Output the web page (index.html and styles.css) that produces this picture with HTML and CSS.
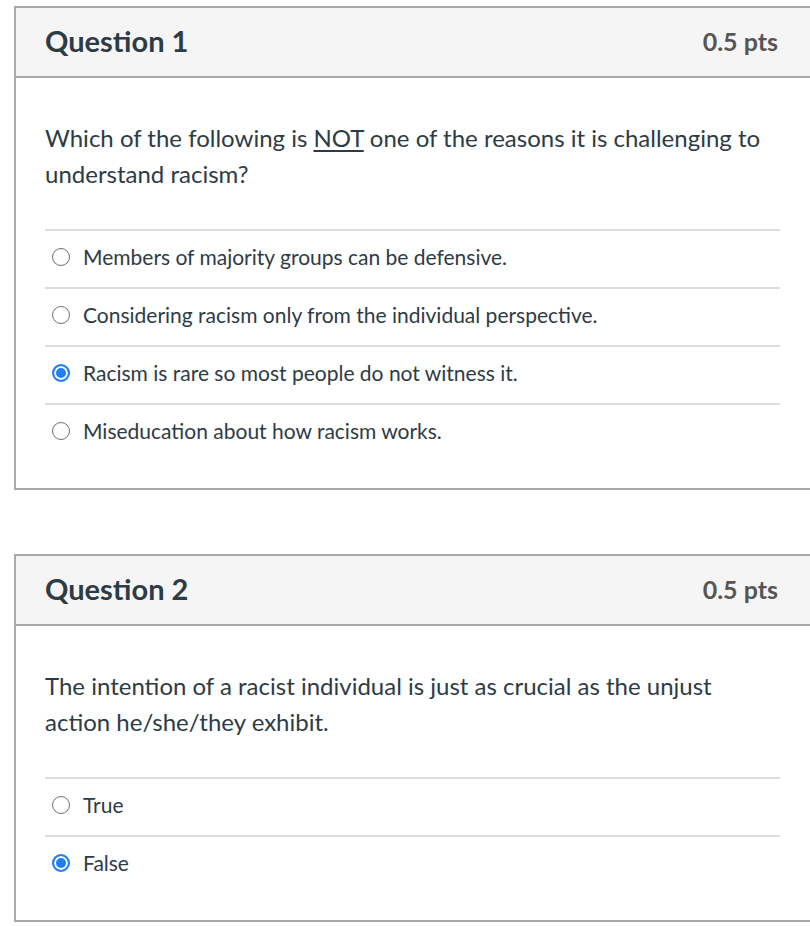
FILE: index.html
```html
<!DOCTYPE html>
<html lang="en">
<head>
<meta charset="utf-8">
<title>Quiz</title>
<link rel="stylesheet" href="styles.css">
</head>
<body>
<div class="page">
  <section class="card">
    <header class="card-header">
      <h2 class="q-title">Question 1</h2>
      <span class="q-pts">0.5 pts</span>
    </header>
    <div class="card-body">
      <p class="q-text">Which of the following is <u>NOT</u> one of the reasons it is challenging to understand racism?</p>
      <ul class="answers">
        <li class="answer"><span class="radio"></span><span class="answer-label">Members of majority groups can be defensive.</span></li>
        <li class="answer"><span class="radio"></span><span class="answer-label">Considering racism only from the individual perspective.</span></li>
        <li class="answer"><span class="radio checked"></span><span class="answer-label">Racism is rare so most people do not witness it.</span></li>
        <li class="answer"><span class="radio"></span><span class="answer-label">Miseducation about how racism works.</span></li>
      </ul>
    </div>
  </section>

  <section class="card">
    <header class="card-header">
      <h2 class="q-title">Question 2</h2>
      <span class="q-pts">0.5 pts</span>
    </header>
    <div class="card-body">
      <p class="q-text">The intention of a racist individual is just as crucial as the unjust action he/she/they exhibit.</p>
      <ul class="answers">
        <li class="answer"><span class="radio"></span><span class="answer-label">True</span></li>
        <li class="answer"><span class="radio checked"></span><span class="answer-label">False</span></li>
      </ul>
    </div>
  </section>
</div>
</body>
</html>
```

FILE: styles.css
```css
html, body {
  margin: 0;
  padding: 0;
  background: #ffffff;
  overflow: hidden;
}

body {
  font-family: Lato, "Open Sans", "Liberation Sans", sans-serif;
  color: #2d3b45;
}

.page {
  display: flex;
  flex-direction: column;
  gap: 64px;
  padding: 6px 0 0 14px;
}

.card {
  width: 796px;
  box-sizing: border-box;
  border: 2px solid #aaaaaa;
  border-right: none;
  background: #ffffff;
}

.card-header {
  display: flex;
  align-items: center;
  justify-content: space-between;
  box-sizing: border-box;
  height: 70px;
  padding: 0 32px 3px 29px;
  background: #f5f5f5;
  border-bottom: 2px solid #aaaaaa;
}

.q-title {
  margin: 0;
  font-size: 29px;
  font-weight: 700;
  color: #2d3b45;
}

.q-pts {
  font-size: 25px;
  font-weight: 700;
  color: #555555;
}

.card-body {
  padding: 42px 30px 27px 29px;
}

.q-text {
  margin: 0;
  font-size: 24px;
  line-height: 36px;
}

.q-text u {
  text-decoration-thickness: 2px;
  text-underline-offset: 3px;
}

.answers {
  list-style: none;
  margin: 37px 0 0 0;
  padding: 0;
}

.answer {
  display: flex;
  align-items: center;
  gap: 13px;
  box-sizing: border-box;
  height: 58px;
  padding: 0 0 4px 7px;
  border-top: 2px solid #dddddd;
}

.radio {
  flex: none;
  width: 18px;
  height: 18px;
  box-sizing: border-box;
  border-radius: 50%;
  border: 1.5px solid #6f6f6f;
  background: #ffffff;
}

.radio.checked {
  border: 2px solid #1f7ff7;
  background: #1f7ff7;
  box-shadow: inset 0 0 0 2px #ffffff;
}

.answer-label {
  font-size: 21px;
  line-height: 26px;
}
```
